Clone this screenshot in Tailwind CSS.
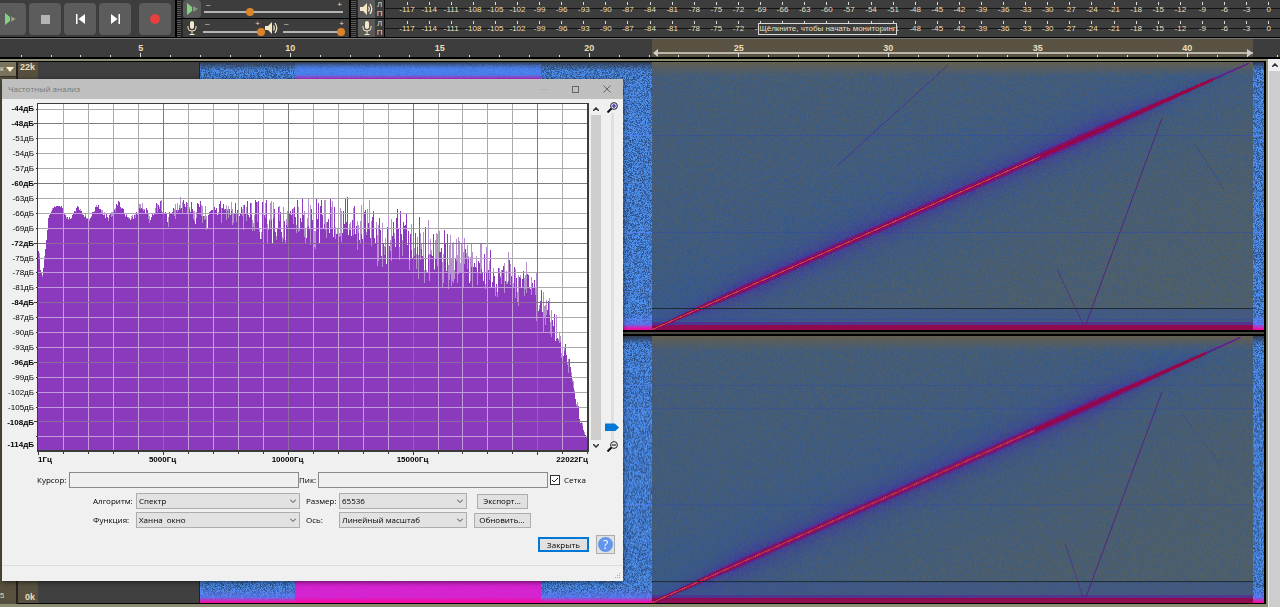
<!DOCTYPE html>
<html lang="ru">
<head>
    <meta charset="UTF-8">
    <meta name="viewport" content="width=device-width, initial-scale=1.0">
    <title>Частотный анализ</title>
    <script src="https://cdn.jsdelivr.net/npm/@tailwindcss/browser@4"></script>
</head>
<body class="h-screen flex flex-col overflow-hidden bg-[#3d3d3d] font-['Liberation_Sans',sans-serif] text-[#eadfba]">

    <!-- Toolbars -->
    <header class="flex h-[38px] shrink-0 border-b border-black">
        <!-- Transport -->
        <div class="flex items-start gap-[3px] pt-[3px] w-[175px] shrink-0">
            <button aria-label="Воспроизвести" class="w-[26px] h-8 bg-[#5c5c5c] rounded-r-sm flex items-center pl-[4px]">
                <svg class="w-3 h-3" viewBox="0 0 12 12"><path d="M1 0L6 4V8L1 12Z" fill="#84d084"/><path d="M7 3L12 6L7 9Z" fill="#789578"/><circle cx="9" cy="6" r="1" fill="#d7a36a"/></svg>
            </button>
            <button aria-label="Стоп" class="w-8 h-8 bg-[#5c5c5c] rounded-sm flex items-center justify-center">
                <svg class="w-[9px] h-[9px]" viewBox="0 0 9 9"><path d="M0 0H9V9H0Z" fill="#b4b4b4"/></svg>
            </button>
            <button aria-label="К началу" class="w-8 h-8 bg-[#5c5c5c] rounded-sm flex items-center justify-center">
                <svg class="w-[9px] h-[10px]" viewBox="0 0 9 10"><path d="M0 0H1.500V10H0ZM9 0V10L2.500 5Z" fill="#fff"/></svg>
            </button>
            <button aria-label="К концу" class="w-8 h-8 bg-[#5c5c5c] rounded-sm flex items-center justify-center">
                <svg class="w-[9px] h-[10px]" viewBox="0 0 9 10"><path d="M7.500 0H9V10H7.500ZM0 0V10L6.500 5Z" fill="#fff"/></svg>
            </button>
            <button aria-label="Запись" class="w-8 h-8 ml-[5px] bg-[#5c5c5c] rounded-sm flex items-center justify-center">
                <svg class="w-[10px] h-[10px]" viewBox="0 0 10 10"><circle cx="5" cy="5" r="5" fill="#e5403f"/></svg>
            </button>
        </div>

        <!-- Speed and volume sliders -->
        <div class="flex flex-col w-[174px] shrink-0 border-l-2 border-black">
            <div class="flex h-[19px] border-b border-black">
                <div class="w-[6px] bg-[repeating-linear-gradient(#1c1c1c_0_1px,#5a5a5a_1px_2px)] border-r-2 border-[#262626]"></div>
                <button aria-label="Скорость" class="w-[18px] bg-[#5a5a5a] flex items-center justify-center rounded-sm">
                    <svg class="w-3 h-3" viewBox="0 0 12 12"><path d="M1 0L6 4V8L1 12Z" fill="#84d084"/><path d="M7 3L12 6L7 9Z" fill="#6fa56f"/></svg>
                </button>
                <div class="relative flex items-end pb-[1px] pl-[3px] flex-1 pr-[6px]">
                    <span class="absolute left-[5px] top-0 text-[8px] leading-[9px]">–</span>
                    <span class="absolute right-[7px] top-0 text-[8px] leading-[9px]">+</span>
                    <input type="range" aria-label="Скорость воспроизведения" value="32" class="appearance-none bg-transparent w-full h-[10px] [&::-webkit-slider-runnable-track]:h-[8px] [&::-webkit-slider-runnable-track]:bg-[linear-gradient(transparent_3px,#b5b5b5_3px_5px,transparent_5px)] [&::-webkit-slider-thumb]:appearance-none [&::-webkit-slider-thumb]:w-2 [&::-webkit-slider-thumb]:h-2 [&::-webkit-slider-thumb]:rounded-full [&::-webkit-slider-thumb]:bg-[#dd8427]">
                </div>
            </div>
            <div class="flex h-[18px] items-stretch">
                <div class="w-[6px] bg-[repeating-linear-gradient(#1c1c1c_0_1px,#5a5a5a_1px_2px)] border-r-2 border-[#262626]"></div>
                <div class="w-[18px] flex items-center justify-center">
                    <svg class="w-[10px] h-[14px]" viewBox="0 0 10 14"><rect x="3" y="0" width="4" height="8" rx="2" fill="#f4e8c8"/><path d="M1 5V7Q1 10 5 10Q9 10 9 7V5M5 10V13M2.500 13.500H7.500" fill="none" stroke="#f4e8c8"/></svg>
                </div>
                <div class="relative flex items-end w-[64px] pl-[2px]">
                    <span class="absolute left-[4px] top-0 text-[8px] leading-[9px]">–</span>
                    <span class="absolute right-[5px] top-0 text-[8px] leading-[9px]">+</span>
                    <input type="range" aria-label="Уровень записи" value="100" class="appearance-none bg-transparent w-full h-[10px] [&::-webkit-slider-runnable-track]:h-[8px] [&::-webkit-slider-runnable-track]:bg-[linear-gradient(transparent_3px,#b5b5b5_3px_5px,transparent_5px)] [&::-webkit-slider-thumb]:appearance-none [&::-webkit-slider-thumb]:w-2 [&::-webkit-slider-thumb]:h-2 [&::-webkit-slider-thumb]:rounded-full [&::-webkit-slider-thumb]:bg-[#dd8427]">
                </div>
                <svg class="w-[13px] h-[12px] mt-[3px]" viewBox="0 0 13 12"><path d="M0 4H3L7 0V12L3 8H0Z" fill="#f4e8c8"/><path d="M8.500 3.500Q10 6 8.500 8.500M10 1Q13.500 6 10 11" fill="none" stroke="#f4e8c8" stroke-width="1.300"/></svg>
                <div class="relative flex items-end flex-1 pl-[5px] pr-[4px]">
                    <span class="absolute left-[6px] top-0 text-[8px] leading-[9px]">–</span>
                    <span class="absolute right-[5px] top-0 text-[8px] leading-[9px]">+</span>
                    <input type="range" aria-label="Громкость" value="100" class="appearance-none bg-transparent w-full h-[10px] [&::-webkit-slider-runnable-track]:h-[8px] [&::-webkit-slider-runnable-track]:bg-[linear-gradient(transparent_3px,#b5b5b5_3px_5px,transparent_5px)] [&::-webkit-slider-thumb]:appearance-none [&::-webkit-slider-thumb]:w-2 [&::-webkit-slider-thumb]:h-2 [&::-webkit-slider-thumb]:rounded-full [&::-webkit-slider-thumb]:bg-[#dd8427]">
                </div>
            </div>
        </div>

        <!-- Level meters -->
        <div class="relative flex flex-col flex-1 border-l-2 border-black">
            <div class="flex h-[19px] border-b border-black">
                <div class="w-[7px] bg-[repeating-linear-gradient(#1c1c1c_0_1px,#5a5a5a_1px_2px)] border-r-2 border-[#262626]"></div>
                <button aria-label="Индикатор воспроизведения" class="w-[17px] bg-[#5a5a5a] flex items-center justify-center">
                    <svg class="w-[13px] h-[12px]" viewBox="0 0 13 12"><path d="M0 4H3L7 0V12L3 8H0Z" fill="#f4e8c8"/><path d="M8.500 3.500Q10 6 8.500 8.500M10 1Q13.500 6 10 11" fill="none" stroke="#f4e8c8" stroke-width="1.300"/></svg>
                </button>
                <div class="w-[10px] flex flex-col items-center justify-around text-[8px] leading-[9px] border-r border-black"><span>Л</span><span>П</span></div>
                <div data-meter class="flex flex-1 pl-[11px] bg-[linear-gradient(#3d3d3d_8px,#161616_8px_9px,#3d3d3d_9px)]"></div>
            </div>
            <div class="flex h-[18px]">
                <div class="w-[7px] bg-[repeating-linear-gradient(#1c1c1c_0_1px,#5a5a5a_1px_2px)] border-r-2 border-[#262626]"></div>
                <button aria-label="Индикатор записи" class="w-[17px] bg-[#5a5a5a] flex items-center justify-center">
                    <svg class="w-[10px] h-[14px]" viewBox="0 0 10 14"><rect x="3" y="0" width="4" height="8" rx="2" fill="#f4e8c8"/><path d="M1 5V7Q1 10 5 10Q9 10 9 7V5M5 10V13M2.500 13.500H7.500" fill="none" stroke="#f4e8c8"/></svg>
                </button>
                <div class="w-[10px] flex flex-col items-center justify-around text-[8px] leading-[9px] border-r border-black"><span>Л</span><span>П</span></div>
                <div data-meter class="flex flex-1 pl-[11px] bg-[linear-gradient(#3d3d3d_9px,#161616_9px_10px,#3d3d3d_10px)]"></div>
            </div>
            <div class="absolute top-[19px] right-[400px] w-px h-[18px] bg-[#3c3ca8]"></div>
            <div class="absolute top-[23px] right-[383px] w-[139px] h-[12px] border border-[#d8d8d8] bg-[#3d3d3d] text-[8px] leading-[10px] text-center whitespace-nowrap">Щёлкните, чтобы начать мониторинг</div>
        </div>
    </header>

    <!-- Timeline -->
    <div class="relative flex shrink-0 h-[21px] border-t border-[#777] border-b-2 border-b-black">
        <div class="absolute inset-y-0 left-[652px] right-[27px] bg-[#595243]">
            <svg class="absolute left-0 top-[10px] w-full h-[8px]"><path d="M3 4H2000" stroke="#b9b5ab" stroke-width="2"/></svg>
            <svg class="absolute left-[1px] top-[10px] w-[6px] h-[8px]" viewBox="0 0 6 8"><path d="M0 4L5 0V8Z" fill="#ccc"/></svg>
            <svg class="absolute right-0 top-[10px] w-[6px] h-[8px]" viewBox="0 0 6 8"><path d="M6 4L0 0V8Z" fill="#ccc"/></svg>
        </div>
        <div class="relative grid grid-cols-2 items-end w-[66px] pl-[6px] justify-items-center shrink-0">
            <i class="w-px h-[2px] bg-[#ddd]"></i><i class="w-px h-[2px] bg-[#ddd]"></i>
        </div>
        <div id="timeline" class="relative grid grid-cols-8 flex-1"></div>
        <div class="relative flex items-end justify-end w-[18px] pr-[2px] shrink-0"><i class="w-px h-[2px] bg-[#ddd]"></i></div>
    </div>

    <!-- Tracks -->
    <main class="flex flex-1 min-h-0">
        <div class="flex flex-1 min-w-0 border-t-2 border-b-3 border-r-2 border-[#8c8d70]">
            <div class="flex flex-col justify-between w-[18px] shrink-0 bg-[#57503f] border-r-2 border-[#24221c] border-t border-t-black text-[8px]">
                <div class="flex items-center h-[15px] bg-[#7b745c] border-b border-[#39352b]">
                    <span class="w-[6px] leading-[10px] overflow-hidden">к</span>
                    <svg class="w-[8px] h-[5px]" viewBox="0 0 8 5"><path d="M0 0H8L4 5Z" fill="#fff3d0"/></svg>
                </div>
                <span class="w-[4px] h-[12px] leading-[8px] overflow-hidden">5</span>
            </div>
            <div class="flex flex-col justify-between w-5 shrink-0 bg-[#57503f] border-t border-b border-black text-[9px] leading-[11px] font-bold text-right pr-[3px]">
                <span>22k</span>
                <span>0k</span>
            </div>
            <div class="w-[162px] shrink-0 bg-[#404040] border-t border-b border-black border-r border-r-[#222]"></div>
            <div class="flex flex-col flex-1 min-w-0 border-t border-b border-r-2 border-black">
                <canvas id="left" class="block w-full flex-1 min-h-0"></canvas>
                <div class="h-[6px] shrink-0 bg-[#474740] border-y-2 border-black"></div>
                <canvas id="right" class="block w-full flex-1 min-h-0"></canvas>
            </div>
        </div>
        <div class="w-3 shrink-0 bg-[#cdcdcd] border-l border-[#eee]">
            <div class="h-3 bg-[#f0f0f0] flex items-center justify-center">
                <svg class="w-[6px] h-[4px]" viewBox="0 0 6 4"><path d="M0 4L3 1L6 4" fill="none" stroke="#333" stroke-width="1.500"/></svg>
            </div>
        </div>
    </main>

    <!-- Frequency analysis window -->
    <section class="absolute left-[2px] top-[79px] w-[621px] flex flex-col bg-[#f0f0f0] text-black text-[8px] leading-[10px] font-['Open_Sans','Noto_Sans',sans-serif] shadow-[0_1px_5px_rgba(0,0,0,0.6)]">
        <div class="flex items-center justify-between h-5 pl-[6px] pr-[12px] bg-[#bfbfbf] text-[#777]">
            <h1>Частотный анализ</h1>
            <div class="flex items-center gap-6">
                <button aria-label="Свернуть" class="w-2 h-px bg-[#b0b0b0]"></button>
                <button aria-label="Развернуть" class="w-[7px] h-[7px] border border-[#666]"></button>
                <button aria-label="Закрыть окно"><svg class="w-2 h-2" viewBox="0 0 8 8"><path d="M0.500 0.500L7.500 7.500M7.500 0.500L0.500 7.500" stroke="#666" fill="none"/></svg></button>
            </div>
        </div>

        <div class="flex pt-[3px] font-['Liberation_Sans',sans-serif]">
            <div class="w-8 text-right">
                <div id="levels" class="grid auto-rows-fr h-[328px]"></div>
                <p class="font-bold pt-[10px]">-114дБ</p>
            </div>
            <div class="w-[556px]">
                <canvas id="plot" width="556" height="353" class="block"></canvas>
                <div class="relative h-[11px] font-bold flex pl-[4px]">
                    <span class="w-[62px]">1Гц</span>
                    <span class="w-[125px] text-center">5000Гц</span>
                    <span class="w-[125px] text-center">10000Гц</span>
                    <span class="w-[125px] text-center">15000Гц</span>
                    <span class="flex-1 text-right pr-[2px]">22022Гц</span>
                </div>
            </div>
            <div class="flex flex-col items-center justify-between w-[11px] h-[350px] pt-[5px] pb-[4px]">
                <svg class="w-[6px] h-[4px] shrink-0" viewBox="0 0 6 4"><path d="M0 4L3 1L6 4" fill="none" stroke="#333" stroke-width="1.500"/></svg>
                <div class="w-[10px] flex-1 my-[4px] bg-[#cdcdcd]"></div>
                <svg class="w-[6px] h-[4px] shrink-0" viewBox="0 0 6 4"><path d="M0 0L3 3L6 0" fill="none" stroke="#333" stroke-width="1.500"/></svg>
            </div>
            <div class="flex flex-col items-center w-[22px] h-[350px]">
                <svg class="w-[11px] h-[11px] shrink-0" viewBox="0 0 11 11"><circle cx="7" cy="4" r="3.400" fill="#dde" stroke="#223" /><path d="M5 4H9M7 2V6" stroke="#22a" stroke-width="1.200"/><path d="M4.500 6.500L0.500 10.500" stroke="#112" stroke-width="2"/></svg>
                <input type="range" aria-label="Масштаб" value="97" class="appearance-none my-[7px] flex-1 min-h-0 w-[14px] bg-[linear-gradient(90deg,transparent_6px,#dfdfdf_6px_9px,transparent_9px)] [writing-mode:vertical-lr] [&::-webkit-slider-thumb]:appearance-none [&::-webkit-slider-thumb]:w-[14px] [&::-webkit-slider-thumb]:h-[8px] [&::-webkit-slider-thumb]:bg-[#0078d7] [&::-webkit-slider-thumb]:[clip-path:polygon(0_0,70%_0,100%_50%,70%_100%,0_100%)]">
                <svg class="w-[11px] h-[11px] shrink-0" viewBox="0 0 11 11"><circle cx="7" cy="4" r="3.400" fill="#eee" stroke="#222"/><path d="M5 4H9" stroke="#222" stroke-width="1.200"/><path d="M4.500 6.500L0.500 10.500" stroke="#111" stroke-width="2"/></svg>
            </div>
        </div>

        <form class="pt-[6px]" onsubmit="return false">
            <div class="flex items-center h-4 pl-[35px]">
                <label for="cursor" class="w-8">Курсор:</label>
                <input id="cursor" type="text" readonly class="w-[230px] h-4 border border-[#8a8a8a] bg-[#f0f0f0]">
                <label for="peak" class="w-[19px]">Пик:</label>
                <input id="peak" type="text" readonly class="w-[230px] h-4 border border-[#8a8a8a] bg-[#f0f0f0]">
                <label class="flex items-center gap-[4px] pl-[2px]">
                    <span class="relative flex">
                        <input type="checkbox" checked class="appearance-none w-[10px] h-[10px] border border-[#333] bg-white">
                        <svg class="absolute inset-0 w-[10px] h-[10px] pointer-events-none" viewBox="0 0 10 10"><path d="M2 5L4 7L8 3" fill="none" stroke="#222"/></svg>
                    </span>
                    Сетка
                </label>
            </div>
            <div class="grid grid-cols-[43px_164px_39px_128px_70px] items-center gap-y-[3px] pt-[5px] pl-[91px]">
                <label for="algorithm">Алгоритм:</label>
                <div class="relative">
                    <select id="algorithm" class="block appearance-none w-full h-4 px-[2px] bg-[#e2e2e2] border border-[#adadad]"><option>Спектр</option></select>
                    <svg class="absolute right-[4px] top-[6px] w-[6px] h-[4px] pointer-events-none" viewBox="0 0 6 4"><path d="M0 0.500L3 3.500L6 0.500" fill="none" stroke="#444"/></svg>
                </div>
                <label for="size" class="pl-[6px]">Размер:</label>
                <div class="relative">
                    <select id="size" class="block appearance-none w-full h-4 px-[2px] bg-[#e2e2e2] border border-[#adadad]"><option>65536</option></select>
                    <svg class="absolute right-[4px] top-[6px] w-[6px] h-[4px] pointer-events-none" viewBox="0 0 6 4"><path d="M0 0.500L3 3.500L6 0.500" fill="none" stroke="#444"/></svg>
                </div>
                <button class="justify-self-center w-[51px] h-[15px] bg-[#e1e1e1] border border-[#adadad]">Экспорт...</button>
                <label for="window">Функция:</label>
                <div class="relative">
                    <select id="window" class="block appearance-none w-full h-4 px-[2px] bg-[#e2e2e2] border border-[#adadad] whitespace-pre"><option>Ханна&nbsp; окно</option></select>
                    <svg class="absolute right-[4px] top-[6px] w-[6px] h-[4px] pointer-events-none" viewBox="0 0 6 4"><path d="M0 0.500L3 3.500L6 0.500" fill="none" stroke="#444"/></svg>
                </div>
                <label for="axis" class="pl-[6px]">Ось:</label>
                <div class="relative">
                    <select id="axis" class="block appearance-none w-full h-4 px-[2px] bg-[#e2e2e2] border border-[#adadad]"><option>Линейный масштаб</option></select>
                    <svg class="absolute right-[4px] top-[6px] w-[6px] h-[4px] pointer-events-none" viewBox="0 0 6 4"><path d="M0 0.500L3 3.500L6 0.500" fill="none" stroke="#444"/></svg>
                </div>
                <button class="justify-self-center w-[57px] h-[15px] bg-[#e1e1e1] border border-[#adadad]">Обновить...</button>
            </div>
            <div class="flex items-center justify-end gap-[7px] pt-[7px] pr-[8px]">
                <button class="w-[51px] h-[15px] leading-[11px] bg-[#e1e1e1] border-2 border-[#0078d7]">Закрыть</button>
                <button aria-label="Справка" class="w-[19px] h-[19px] bg-[#e1e1e1] border border-[#adadad] flex items-center justify-center">
                    <span class="w-[15px] h-[15px] rounded-full bg-[#6495ed] text-white text-[12px] leading-[15px]">?</span>
                </button>
            </div>
        </form>
        <div class="flex items-end justify-end h-4 mt-[11px] border-t border-[#dcdcdc] p-[2px]">
            <svg class="w-[6px] h-[6px]" viewBox="0 0 6 6"><path d="M4 0h1v1h-1zM2 2h1v1h-1zM4 2h1v1h-1zM0 4h1v1h-1zM2 4h1v1h-1zM4 4h1v1h-1z" fill="#aaa"/></svg>
        </div>
    </section>

    <script>
        let seed = 7;
        function rnd() {
            seed = (seed + 0x6D2B79F5) | 0;
            let t = Math.imul(seed ^ (seed >>> 15), 1 | seed);
            t = (t + Math.imul(t ^ (t >>> 7), 61 | t)) ^ t;
            return ((t ^ (t >>> 14)) >>> 0) / 4294967296;
        }

        // Meter scales, -117 to 0 dB
        document.querySelectorAll('[data-meter]').forEach(el => {
            for (let db = -117; db <= 0; db += 3) {
                el.innerHTML += `<div class="flex flex-col flex-1 w-0 items-center text-[8px] leading-[10px]">
                    <i class="w-px h-[3px] mt-[2px] bg-[#ddd]"></i><span>${db}</span></div>`;
            }
        });

        // Timeline, one cell per five seconds
        for (let s = 5; s <= 40; s += 5) {
            const tick = '<i class="w-px h-[2px] bg-[#ddd]"></i>';
            document.getElementById('timeline').innerHTML += `
                <div class="flex flex-col justify-between text-center">
                    <span class="text-[9px] leading-[10px] pt-[4px] font-bold">${s}</span>
                    <div class="grid grid-cols-5 items-end justify-items-center">${tick + tick}<i class="w-px h-[4px] bg-[#ddd]"></i>${tick + tick}</div>
                </div>`;
        }

        // Level labels
        [44, 48, 51, 54, 57, 60, 63, 66, 69, 72, 75, 78, 81, 84, 87, 90, 93, 96, 99, 102, 105, 108].forEach((db, i) => {
            const bold = i === 0 || db % 12 === 0;
            document.getElementById('levels').innerHTML +=
                `<span class="flex items-center justify-end ${bold ? 'font-bold' : ''}">-${db}дБ</span>`;
        });

        // Spectrum envelope: frequency position, highest peak, lowest dip
        const envelope = [
            [0, 132, 150], [2, 160, 174], [4, 172, 177], [7, 145, 150], [10, 115, 120], [14, 105, 108], [18, 103, 105], [23, 104, 106],
            [28, 114, 118], [33, 115, 119], [39, 103, 107], [46, 111, 116], [51, 116, 121], [58, 101, 107], [70, 114, 120],
            [80, 98, 107], [92, 115, 121], [103, 98, 110], [112, 111, 127], [121, 95, 112], [132, 109, 129], [142, 94, 110],
            [162, 96, 126], [172, 108, 129], [186, 94, 122], [207, 97, 134], [232, 97, 142], [264, 95, 147], [292, 95, 152],
            [327, 95, 164], [352, 104, 170], [367, 105, 172], [397, 117, 187], [417, 134, 189], [442, 137, 190], [462, 152, 199],
            [474, 149, 202], [492, 162, 212], [507, 185, 234], [517, 205, 250], [524, 232, 257], [532, 257, 277], [537, 285, 302],
            [542, 312, 322], [546, 329, 333], [551, 339, 342]
        ];

        function envelopeAt(x) {
            let i = 1;
            while (i < envelope.length - 1 && envelope[i][0] < x) i++;
            const a = envelope[i - 1], b = envelope[i], t = (x - a[0]) / (b[0] - a[0]);
            return [a[1] + (b[1] - a[1]) * t, a[2] + (b[2] - a[2]) * t];
        }

        function drawPlot() {
            const c = document.getElementById('plot').getContext('2d');
            const grid = (minor, major) => {
                for (let i = 1; i < 22; i++) {
                    c.fillStyle = i % 5 ? minor : major;
                    c.fillRect(Math.round(4 + i * 24.97), 1, 1, 348);
                }
                for (let i = 0; i < 23; i++) {
                    c.fillStyle = i % 4 === 1 ? major : minor;
                    c.fillRect(4, Math.round(6.5 + i * 14.9), 551, 1);
                }
            };
            for (let x = 0; x < 550; x++) {
                const [hi, lo] = envelopeAt(x);
                const range = lo - hi;
                const floor = lo - range * 0.6 * rnd();
                const peak = floor - (floor - hi) * Math.pow(rnd(), 1.1);
                c.fillStyle = '#b692cc';
                c.fillRect(x + 4, Math.round(peak), 1, 349);
                c.fillStyle = '#8b39bd';
                c.fillRect(x + 4, Math.round(rnd() < 0.5 ? floor : peak), 1, 349);
            }
            c.clearRect(0, 349, 556, 10);
            c.globalCompositeOperation = 'source-atop';
            grid('#c49cdc', '#8d6a9c');
            c.globalCompositeOperation = 'destination-over';
            grid('#ababab', '#7c7c7c');
            c.fillStyle = '#fff';
            c.fillRect(4, 1, 551, 348);
            c.globalCompositeOperation = 'source-over';
            c.fillStyle = '#3c3c3c';
            c.fillRect(3, 1, 552, 1);
            c.fillRect(3, 1, 1, 349);
            c.fillRect(553, 1, 2, 349);
            c.fillRect(3, 348, 552, 2);
            for (let i = 0; i <= 22; i++) c.fillRect(Math.round(4 + i * 24.97), 350, 1, i % 5 ? 2 : 3);
            for (let i = 0; i < 23; i++) {
                const len = i % 4 === 1 ? 4 : 2;
                c.fillRect(4 - len, Math.round(6.5 + i * 14.9), len, 1);
            }
        }

        const mix = (a, b, t) => [a[0] + (b[0] - a[0]) * t, a[1] + (b[1] - a[1]) * t, a[2] + (b[2] - a[2]) * t];

        function drawSpectrogram(id, tail, hum, ghosts) {
            const el = document.getElementById(id);
            const w = el.width = el.clientWidth, h = el.height = el.clientHeight;
            if (!w || !h) return;
            const c = el.getContext('2d');
            const img = c.createImageData(w, h);
            const selStart = 452, selEnd = w - 11, endX = w - tail;
            for (let y = 0; y < h; y++) {
                for (let x = 0; x < w; x++) {
                    const n = rnd(), fromBottom = h - y;
                    let p;
                    if (x < selStart || x >= selEnd) {
                        p = mix([43, 75, 125], [78, 145, 240], Math.min(1, n * 1.3));
                        if (y < 8) p = mix([50, 62, 82], p, y / 8);
                        if (x >= 95 && x < 341) {
                            p = mix(p, [76, 128, 245], Math.min(0.8, y / 8));
                            if (y > 12) p = mix(p, [228, 25, 205], Math.min(0.9, (y - 12) / 6));
                        }
                        if (fromBottom < 16 && !(x >= 95 && x < 341)) p = mix(p, [105, 115, 255], (16 - fromBottom) / 16);
                        if (fromBottom < 6) p = mix(p, [245, 10, 160], (7 - fromBottom) / 6);
                        if (hum.includes(y)) p = [82, 130, 240];
                    } else {
                        const t = (x - selStart) / (endX - selStart);
                        const d = y - (h - 1 - t * (h - 2));
                        const ad = Math.abs(d);
                        const blue = 0.38 + 0.45 * Math.exp(-ad / 70) + (d < 0 ? 0.12 : 0) - 0.12 * t;
                        p = mix([86, 97, 96], [52, 88, 142], Math.max(0, Math.min(1, blue + (n - 0.5) * 0.7)));
                        if (y < 14) p = mix([98, 94, 80], p, y / 14);
                        if (fromBottom < 22) p = mix(p, [58, 84, 145], 0.5);
                        if (hum.includes(y)) p = mix(p, [50, 75, 165], 0.55);
                        if (fromBottom < 9) p = mix(p, [90, 30, 150], 0.6);
                        if (fromBottom < 6) p = [146, 10, 78];
                        const wide = Math.max(0, Math.min(t * 5 + 0.25, (1 - t) * 4, 1));
                        const halo = Math.exp(-ad / (8 * wide + 0.5)) * wide;
                        p = mix(p, [72, 38, 165], Math.min(0.75, halo * (0.55 + n * 0.7)));
                        if (ad < 3.5 * wide + 0.5 && t <= 1) p = mix(p, [150, 0, 100], 0.6);
                        if (ad < 1.5 && t < 0.94) p = [152, 5, 64];
                        if (ad < 0.6 && t < 0.65) p = [184, 70, 84];
                        if (t > 0.94 && t <= 1 && ad < 1) p = mix(p, [85, 35, 155], 0.7);
                    }
                    const k = (y * w + x) * 4;
                    img.data[k] = p[0];
                    img.data[k + 1] = p[1];
                    img.data[k + 2] = p[2];
                    img.data[k + 3] = 255;
                }
            }
            c.putImageData(img, 0, 0);
            c.fillStyle = '#1c2a33';
            c.fillRect(selStart, h - 22, selEnd - selStart, 1);
            // Harmonics folded back from the sweep
            ghosts.forEach(([x1, y1, x2, y2, color]) => {
                c.strokeStyle = color;
                c.beginPath();
                c.moveTo(x1, y1);
                c.lineTo(x2, y2);
                c.stroke();
            });
        }

        function drawTracks() {
            drawSpectrogram('left', 16, [73, 170, 257], [
                [637, 104, 748, 3, 'rgba(70,35,160,0.7)'],
                [857, 207, 883, 262, 'rgba(85,30,130,0.6)'],
                [886, 262, 962, 56, 'rgba(90,20,130,0.8)'],
                [995, 82, 1024, 128, 'rgba(60,50,140,0.4)']
            ]);
            drawSpectrogram('right', 24, [49, 72, 169], [
                [865, 208, 883, 262, 'rgba(85,30,130,0.6)'],
                [886, 262, 962, 56, 'rgba(90,20,130,0.8)'],
                [980, 75, 1022, 132, 'rgba(60,50,140,0.3)']
            ]);
        }

        drawPlot();
        new ResizeObserver(drawTracks).observe(document.getElementById('left'));
    </script>
</body>
</html>
